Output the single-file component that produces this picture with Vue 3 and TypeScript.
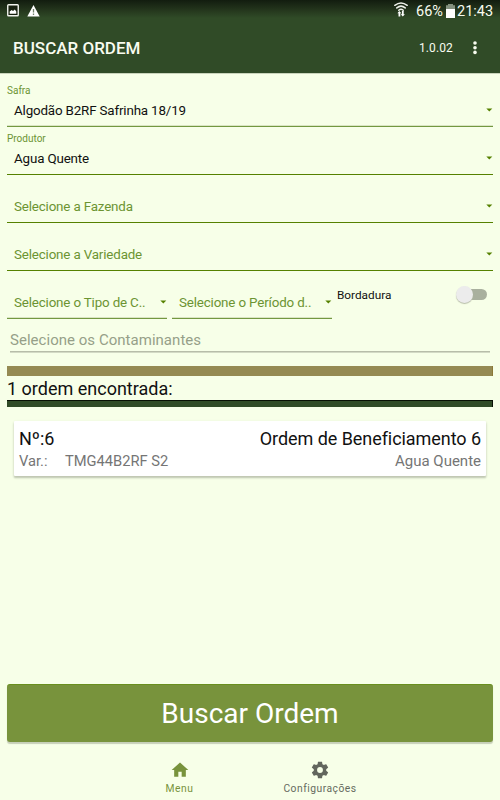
<script setup lang="ts">
interface Field {
  label?: string
  text: string
  soft?: boolean
}

const fields: Field[] = [
  { label: 'Safra', text: 'Algodão B2RF Safrinha 18/19', soft: true },
  { label: 'Produtor', text: 'Agua Quente' },
  { text: 'Selecione a Fazenda' },
  { text: 'Selecione a Variedade' },
]
</script>

<template>
  <div class="screen">
    <header class="top">
      <div class="status">
        <svg class="pic" width="12" height="13" viewBox="0 0 12 13">
          <rect x="0.75" y="0.75" width="10.5" height="11" rx="0.8" fill="#17210f" stroke="#f2f4ee" stroke-width="1.4" />
          <path d="M2.7 9.8V7.6l2-1.6 1.3 1 1.8-1.6 1.5 2.1v2.3z" fill="#fff" />
        </svg>
        <svg class="warn" width="13" height="12" viewBox="0 0 13 12">
          <path d="M6.5 0 12.7 11.6H.3z" fill="#fff" />
          <path d="M6.5 4v3.6M6.5 8.6V10" stroke="#71806a" stroke-width="1.3" />
        </svg>
        <svg class="wifi" width="14" height="15" viewBox="0 0 14 15">
          <g fill="none" stroke="#eef1ea" stroke-width="1.5" stroke-linecap="round">
            <path d="M.8 3.3Q7-1.5 13.2 3.3M2.8 5.9Q7 2.3 11.2 5.9M4.8 8.2Q7 6.3 9.2 8.2" />
          </g>
          <path d="M5.3 9 7.4 11.2H6.3v3.3H4.5v-3.3H3.4zM7.9 9h1.8v3.2h1.2L8.8 14.6 6.7 12.2h1.2z" fill="#fff" />
        </svg>
        <span class="percent">66%</span>
        <svg class="battery" width="9" height="14" viewBox="0 0 9 14">
          <path d="M2 0h5v1.3h2V14H0V1.3h2z" fill="#84907e" />
          <path d="M0 5h9v9H0z" fill="#fff" />
        </svg>
        <span class="clock">21:43</span>
      </div>
      <div class="toolbar">
        <h1>BUSCAR ORDEM</h1>
        <span class="version">1.0.02</span>
        <svg class="more" width="4" height="14" viewBox="0 0 4 14" fill="#f8fcf0">
          <circle cx="2" cy="2" r="1.8" /><circle cx="2" cy="6.7" r="1.8" /><circle cx="2" cy="11.4" r="1.8" />
        </svg>
      </div>
    </header>

    <main>
      <div v-for="(field, i) in fields" :key="i" class="field" :class="{ soft: field.soft }">
        <span class="label">{{ field.label }}</span>
        <div class="value" :class="{ filled: field.label }">
          <span>{{ field.text }}</span>
          <svg class="arrow" width="7" height="4" viewBox="0 0 7 4"><path d="M.3.4h6L3.3 3.6z" /></svg>
        </div>
      </div>
      <div class="triple">
        <div class="field half soft">
          <span class="label"></span>
          <div class="value">
            <span>Selecione o Tipo de C..</span>
            <svg class="arrow" width="7" height="4" viewBox="0 0 7 4"><path d="M.3.4h6L3.3 3.6z" /></svg>
          </div>
        </div>
        <div class="field half soft">
          <span class="label"></span>
          <div class="value">
            <span>Selecione o Período d..</span>
            <svg class="arrow" width="7" height="4" viewBox="0 0 7 4"><path d="M.3.4h6L3.3 3.6z" /></svg>
          </div>
        </div>
        <div class="switch-row">
          <span>Bordadura</span>
          <div class="switch"><i></i></div>
        </div>
      </div>
      <div class="contaminants"><span>Selecione os Contaminantes</span></div>
      <div class="bar tan"></div>
      <div class="found"><span>1 ordem encontrada:</span></div>
      <div class="bar dark"></div>

      <article class="card">
        <div class="line big"><span class="number">Nº:6</span><span class="order">Ordem de Beneficiamento 6</span></div>
        <div class="line small">
          <span class="var">Var.:</span><span class="variety">TMG44B2RF S2</span><span class="farm">Agua Quente</span>
        </div>
      </article>
      <button class="search" type="button"><span>Buscar Ordem</span></button>
    </main>

    <nav>
      <div class="tab active">
        <svg width="20" height="20" viewBox="0 0 24 24"><path d="M10 20v-6h4v6h5v-8h3L12 3 2 12h3v8z" /></svg>
        <span>Menu</span>
      </div>
      <div class="tab">
        <svg width="20" height="20" viewBox="0 0 24 24"><path d="M19.43 12.98c.04-.32.07-.64.07-.98s-.03-.66-.07-.98l2.11-1.65c.19-.15.24-.42.12-.64l-2-3.46c-.12-.22-.39-.3-.61-.22l-2.49 1c-.52-.4-1.08-.73-1.69-.98l-.38-2.65C14.46 2.18 14.25 2 14 2h-4c-.25 0-.46.18-.49.42l-.38 2.65c-.61.25-1.17.59-1.69.98l-2.49-1c-.23-.09-.49 0-.61.22l-2 3.46c-.13.22-.07.49.12.64l2.11 1.65c-.04.32-.07.65-.07.98s.03.66.07.98l-2.11 1.65c-.19.15-.24.42-.12.64l2 3.46c.12.22.39.3.61.22l2.49-1c.52.4 1.08.73 1.69.98l.38 2.65c.03.24.24.42.49.42h4c.25 0 .46-.18.49-.42l.38-2.65c.61-.25 1.17-.59 1.69-.98l2.49 1c.23.09.49 0 .61-.22l2-3.46c.12-.22.07-.49-.12-.64zM12 15.5a3.5 3.5 0 1 1 0-7 3.5 3.5 0 0 1 0 7z" /></svg>
        <span>Configurações</span>
      </div>
    </nav>
  </div>
</template>

<style>
body { margin: 0; }
</style>

<style scoped>
.screen {
  width: 500px;
  height: 800px;
  box-sizing: border-box;
  overflow: hidden;
  display: flex;
  flex-direction: column;
  background: #f7ffe8;
  color: #111;
  font-family: Roboto, sans-serif;
  white-space: nowrap;
}
.top {
  height: 73px;
  flex: none;
  background: linear-gradient(#121c0f 0, #22331b 9px, #304b27 18px);
  box-shadow: 0 1px 0 #c9d3bb;
  color: #f8fcf0;
}
.status {
  height: 22px;
  display: flex;
  align-items: flex-start;
  padding-left: 7px;
  line-height: 23px;
  font-size: 14.5px;
}
.pic { margin-top: 4px; }
.warn { margin: 5px 0 0 8px; }
.wifi { margin: 2px 0 0 354px; }
.percent { width: 27px; margin-left: 8px; }
.battery { margin: 4px 0 0 3px; }
.clock { margin-left: 2px; }
.toolbar { height: 51px; display: flex; align-items: center; padding-left: 13px; }
h1 { width: 406px; margin: 0; font-size: 17px; font-weight: 500; line-height: 50px; }
.version { width: 34px; font-size: 12px; letter-spacing: 0.1px; }
.more { margin-left: 20px; }
main { padding: 6px 7px 0; flex: none; height: 671px; box-sizing: border-box; display: flex; flex-direction: column; }
.field {
  height: 48px;
  flex: none;
  box-sizing: border-box;
  border-bottom: 1px solid #568100;
  color: #6c9432;
}
.field.soft { border-color: #739840; box-shadow: inset 0 -1px 0 #dae5c3; }
.label { display: block; height: 22px; line-height: 24px; font-size: 10px; }
.value { height: 20px; display: flex; align-items: center; padding-left: 7px; font-size: 13.4px; letter-spacing: -0.17px; line-height: 20px; }
.filled { color: #111; }
.arrow { margin: -3px 0 0 auto; fill: #568100; }
.triple { display: flex; height: 48px; flex: none; gap: 5px; }
.half { width: 160px; }
.switch-row { width: 156px; display: flex; justify-content: space-between; font-size: 11.8px; line-height: 49px; }
.switch { width: 30px; height: 11px; margin: 18px 6px 0 0; border-radius: 6px; background: #a9b09e; box-sizing: border-box; }
.switch i { display: block; width: 17px; height: 17px; margin: -3px 0 0 -1px; border-radius: 50%; background: #ececec; box-shadow: 0 1px 1px #b7bda9; }
.contaminants { height: 33px; flex: none; box-sizing: border-box; margin: 0 3px; border-bottom: 1px solid #b7bda9; box-shadow: 0 1px 0 #d3dac5; color: #969f89; font-size: 15px; letter-spacing: 0.03px; line-height: 43px; }
.bar { flex: none; box-sizing: border-box; }
.tan { height: 10px; margin-top: 14px; background: #958a53; border-right: 1px solid #8b7837; }
.found { height: 24px; flex: none; font-size: 18px; line-height: 26px; }
.dark { height: 7px; background: #304b27; border: solid #081005; border-width: 1px 1px 0 0; }
.card {
  height: 55px;
  box-sizing: border-box;
  margin: 14px 7px 0;
  padding: 6px 5px 0;
  border-radius: 1px;
  background: #fff;
  box-shadow: 0 2px 2px #c0c8b3, 0 1px 3px #dce4ce;
}
.line { display: flex; }
.big { height: 24px; font-size: 18px; letter-spacing: -0.06px; line-height: 23px; }
.small { height: 21px; font-size: 14.7px; line-height: 21px; color: #757575; }
.order, .farm { margin-left: auto; }
.farm { font-size: 15px; }
.var { width: 46px; }
.search {
  height: 58px;
  margin: auto 0 2px;
  padding: 0;
  border: 0;
  border-top: 1px solid #698f1e;
  border-radius: 3px;
  background: #78933c;
  color: #fff;
  font: 28px/58px Roboto, sans-serif;
  box-shadow: 0 2px 1px #c6cfb8;
}
nav { height: 56px; display: flex; justify-content: center; }
.tab { width: 140px; display: flex; flex-direction: column; align-items: center; padding-top: 16px; color: #666b60; font-size: 10.3px; line-height: 17px; letter-spacing: 0.5px; }
.tab svg { fill: #62665d; }
.active { width: 141px; margin-left: -1px; color: #78933c; }
.active svg { fill: #78933c; }
</style>
